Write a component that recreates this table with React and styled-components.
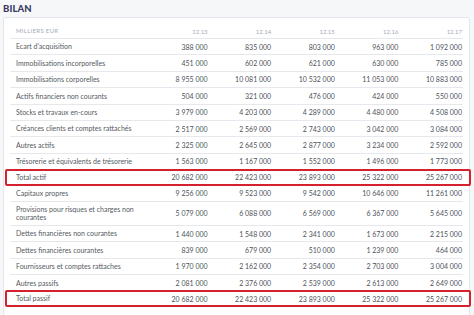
import styled, { createGlobalStyle } from 'styled-components';

const GlobalStyle = createGlobalStyle`
  body {
    margin: 0;
    background: #f6f7f9;
    font-family: Lato, "Open Sans", sans-serif;
  }
`;

const Page = styled.div`
  width: 474px;
  height: 315px;
  overflow: hidden;
`;

const Heading = styled.h2`
  margin: 0;
  height: 17px;
  padding: 4px 0 0 3px;
  box-sizing: border-box;
  font-size: 9.5px;
  line-height: 10px;
  font-weight: 900;
  color: #363b62;
  letter-spacing: 0.1px;
`;

const Card = styled.div`
  margin: 0 4px 0 3px;
  background: #fff;
  border: 1px solid #e2e5ea;
  border-radius: 3px;
  padding: 6px 6px 8px 6px;
  height: 300px;
  box-sizing: border-box;
`;

const Row = styled.div`
  display: grid;
  grid-template-columns: 135px repeat(5, 1fr);
  align-items: center;
  min-height: 16.4px;
  box-sizing: border-box;
  border-bottom: 1px solid #e6e8ec;
  font-size: 7px;
  color: #555a62;
  ${(p) =>
    p.$highlight &&
    `
    border: 2px solid #d5212e;
    border-radius: 2px;
    margin: -1px -8px 0 -5px;
    padding: 0 6px 0 3px;
    min-height: 16.4px;
  `}
  ${(p) => p.$tall && `min-height: 24px;`}
`;

const HeadRow = styled(Row)`
  min-height: 15px;
  font-size: 6px;
  color: #a3aab6;
`;

const Label = styled.div`
  padding: 0 3px 0 6px;
  line-height: 8.5px;
  ${(p) => p.$upper && `text-transform: uppercase; letter-spacing: 0.3px;`}
`;

const Num = styled.div`
  text-align: right;
  padding-right: 1px;
  color: #4e535b;
  white-space: nowrap;
  ${(p) => p.$head && `color: #a3aab6;`}
`;

const years = ['12.13', '12.14', '12.15', '12.16', '12.17'];

const rows = [
  ['Ecart d\u2019acquisition', '388 000', '835 000', '803 000', '963 000', '1 092 000'],
  ['Immobilisations incorporelles', '451 000', '602 000', '621 000', '630 000', '785 000'],
  ['Immobilisations corporelles', '8 955 000', '10 081 000', '10 532 000', '11 053 000', '10 883 000'],
  ['Actifs financiers non courants', '504 000', '321 000', '476 000', '424 000', '550 000'],
  ['Stocks et travaux en-cours', '3 979 000', '4 203 000', '4 289 000', '4 480 000', '4 508 000'],
  ['Créances clients et comptes rattachés', '2 517 000', '2 569 000', '2 743 000', '3 042 000', '3 084 000'],
  ['Autres actifs', '2 325 000', '2 645 000', '2 877 000', '3 234 000', '2 592 000'],
  ['Trésorerie et équivalents de trésorerie', '1 563 000', '1 167 000', '1 552 000', '1 496 000', '1 773 000'],
  ['Total actif', '20 682 000', '22 423 000', '23 893 000', '25 322 000', '25 267 000', 'total'],
  ['Capitaux propres', '9 256 000', '9 523 000', '9 542 000', '10 646 000', '11 261 000'],
  ['Provisions pour risques et charges non courantes', '5 079 000', '6 088 000', '6 569 000', '6 367 000', '5 645 000', 'tall'],
  ['Dettes financières non courantes', '1 440 000', '1 548 000', '2 341 000', '1 673 000', '2 215 000'],
  ['Dettes financières courantes', '839 000', '679 000', '510 000', '1 239 000', '464 000'],
  ['Fournisseurs et comptes rattaches', '1 970 000', '2 162 000', '2 354 000', '2 703 000', '3 004 000'],
  ['Autres passifs', '2 081 000', '2 376 000', '2 539 000', '2 613 000', '2 649 000'],
  ['Total passif', '20 682 000', '22 423 000', '23 893 000', '25 322 000', '25 267 000', 'total'],
];

export default function App() {
  return (
    <Page>
      <GlobalStyle />
      <Heading>BILAN</Heading>
      <Card>
        <HeadRow>
          <Label $upper>Milliers EUR</Label>
          {years.map((y) => (
            <Num key={y} $head>
              {y}
            </Num>
          ))}
        </HeadRow>
        {rows.map(([label, ...rest]) => {
          const kind = rest.length > 5 ? rest[5] : null;
          return (
            <Row key={label} $highlight={kind === 'total'} $tall={kind === 'tall'}>
              <Label>{label}</Label>
              {rest.slice(0, 5).map((v, i) => (
                <Num key={i}>{v}</Num>
              ))}
            </Row>
          );
        })}
      </Card>
    </Page>
  );
}
